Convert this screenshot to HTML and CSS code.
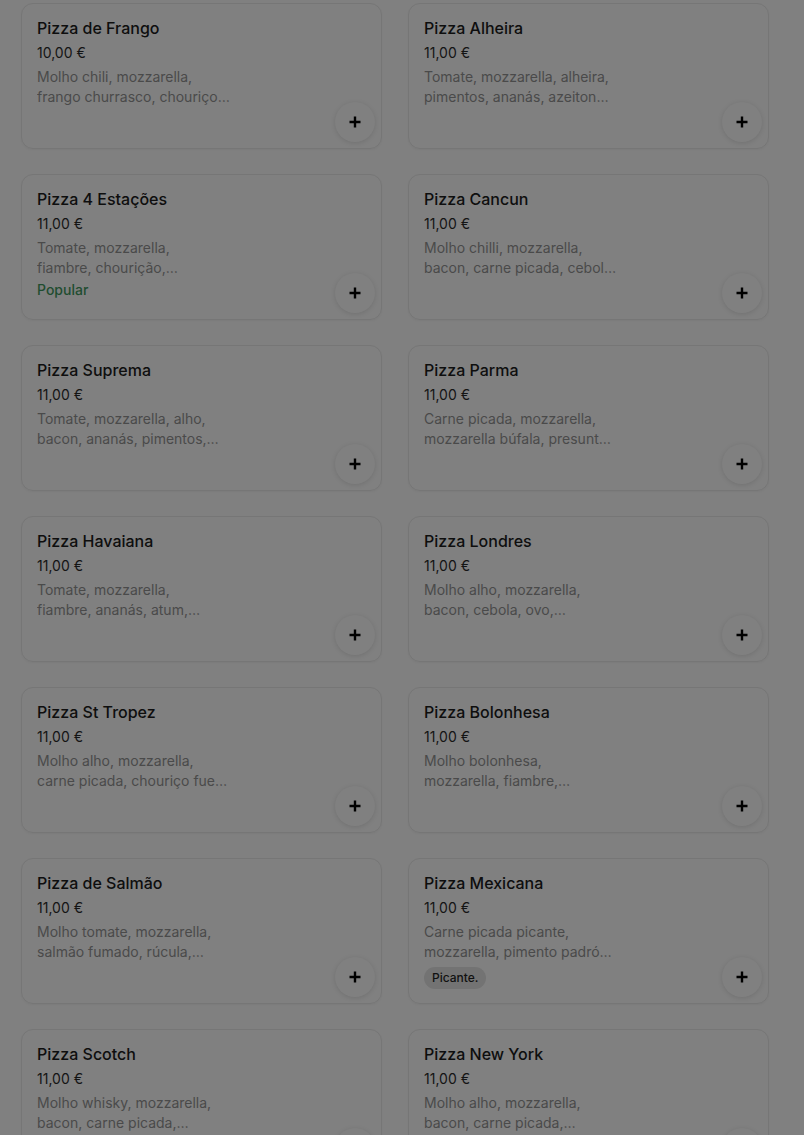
FILE: index.html
```html
<!DOCTYPE html>
<html lang="pt">
<head>
<meta charset="utf-8">
<title>Pizzas</title>
<link rel="stylesheet" href="styles.css">
</head>
<body>
<main class="menu">
  <ul class="grid">
    <li class="card">
      <h3 class="name">Pizza de Frango</h3>
      <div class="price">10,00 €</div>
      <p class="desc"><span class="line">Molho chili, mozzarella,</span><span class="line">frango churrasco, chouriço…</span></p>
      <button class="add" aria-label="Adicionar"><svg viewBox="0 0 16 16"><path d="M8 2.5v11M2.5 8h11"/></svg></button>
    </li>
    <li class="card">
      <h3 class="name">Pizza Alheira</h3>
      <div class="price">11,00 €</div>
      <p class="desc"><span class="line">Tomate, mozzarella, alheira,</span><span class="line">pimentos, ananás, azeiton…</span></p>
      <button class="add" aria-label="Adicionar"><svg viewBox="0 0 16 16"><path d="M8 2.5v11M2.5 8h11"/></svg></button>
    </li>
    <li class="card">
      <h3 class="name">Pizza 4 Estações</h3>
      <div class="price">11,00 €</div>
      <p class="desc"><span class="line">Tomate, mozzarella,</span><span class="line">fiambre, chourição,…</span></p>
      <span class="popular">Popular</span>
      <button class="add" aria-label="Adicionar"><svg viewBox="0 0 16 16"><path d="M8 2.5v11M2.5 8h11"/></svg></button>
    </li>
    <li class="card">
      <h3 class="name">Pizza Cancun</h3>
      <div class="price">11,00 €</div>
      <p class="desc"><span class="line">Molho chilli, mozzarella,</span><span class="line">bacon, carne picada, cebol…</span></p>
      <button class="add" aria-label="Adicionar"><svg viewBox="0 0 16 16"><path d="M8 2.5v11M2.5 8h11"/></svg></button>
    </li>
    <li class="card">
      <h3 class="name">Pizza Suprema</h3>
      <div class="price">11,00 €</div>
      <p class="desc"><span class="line">Tomate, mozzarella, alho,</span><span class="line">bacon, ananás, pimentos,…</span></p>
      <button class="add" aria-label="Adicionar"><svg viewBox="0 0 16 16"><path d="M8 2.5v11M2.5 8h11"/></svg></button>
    </li>
    <li class="card">
      <h3 class="name">Pizza Parma</h3>
      <div class="price">11,00 €</div>
      <p class="desc"><span class="line">Carne picada, mozzarella,</span><span class="line">mozzarella búfala, presunt…</span></p>
      <button class="add" aria-label="Adicionar"><svg viewBox="0 0 16 16"><path d="M8 2.5v11M2.5 8h11"/></svg></button>
    </li>
    <li class="card">
      <h3 class="name">Pizza Havaiana</h3>
      <div class="price">11,00 €</div>
      <p class="desc"><span class="line">Tomate, mozzarella,</span><span class="line">fiambre, ananás, atum,…</span></p>
      <button class="add" aria-label="Adicionar"><svg viewBox="0 0 16 16"><path d="M8 2.5v11M2.5 8h11"/></svg></button>
    </li>
    <li class="card">
      <h3 class="name">Pizza Londres</h3>
      <div class="price">11,00 €</div>
      <p class="desc"><span class="line">Molho alho, mozzarella,</span><span class="line">bacon, cebola, ovo,…</span></p>
      <button class="add" aria-label="Adicionar"><svg viewBox="0 0 16 16"><path d="M8 2.5v11M2.5 8h11"/></svg></button>
    </li>
    <li class="card">
      <h3 class="name">Pizza St Tropez</h3>
      <div class="price">11,00 €</div>
      <p class="desc"><span class="line">Molho alho, mozzarella,</span><span class="line">carne picada, chouriço fue…</span></p>
      <button class="add" aria-label="Adicionar"><svg viewBox="0 0 16 16"><path d="M8 2.5v11M2.5 8h11"/></svg></button>
    </li>
    <li class="card">
      <h3 class="name">Pizza Bolonhesa</h3>
      <div class="price">11,00 €</div>
      <p class="desc"><span class="line">Molho bolonhesa,</span><span class="line">mozzarella, fiambre,…</span></p>
      <button class="add" aria-label="Adicionar"><svg viewBox="0 0 16 16"><path d="M8 2.5v11M2.5 8h11"/></svg></button>
    </li>
    <li class="card">
      <h3 class="name">Pizza de Salmão</h3>
      <div class="price">11,00 €</div>
      <p class="desc"><span class="line">Molho tomate, mozzarella,</span><span class="line">salmão fumado, rúcula,…</span></p>
      <button class="add" aria-label="Adicionar"><svg viewBox="0 0 16 16"><path d="M8 2.5v11M2.5 8h11"/></svg></button>
    </li>
    <li class="card">
      <h3 class="name">Pizza Mexicana</h3>
      <div class="price">11,00 €</div>
      <p class="desc"><span class="line">Carne picada picante,</span><span class="line">mozzarella, pimento padró…</span></p>
      <span class="chip">Picante.</span>
      <button class="add" aria-label="Adicionar"><svg viewBox="0 0 16 16"><path d="M8 2.5v11M2.5 8h11"/></svg></button>
    </li>
    <li class="card">
      <h3 class="name">Pizza Scotch</h3>
      <div class="price">11,00 €</div>
      <p class="desc"><span class="line">Molho whisky, mozzarella,</span><span class="line">bacon, carne picada,…</span></p>
      <button class="add" aria-label="Adicionar"><svg viewBox="0 0 16 16"><path d="M8 2.5v11M2.5 8h11"/></svg></button>
    </li>
    <li class="card">
      <h3 class="name">Pizza New York</h3>
      <div class="price">11,00 €</div>
      <p class="desc"><span class="line">Molho alho, mozzarella,</span><span class="line">bacon, carne picada,…</span></p>
      <button class="add" aria-label="Adicionar"><svg viewBox="0 0 16 16"><path d="M8 2.5v11M2.5 8h11"/></svg></button>
    </li>
  </ul>
</main>
</body>
</html>
```
FILE: styles.css
```css
html, body {
  margin: 0;
  padding: 0;
  background: #808080;
}
body {
  font-family: Inter, "Liberation Sans", sans-serif;
  color: #111;
  overflow: hidden;
}
.menu {
  padding: 3px 0 0 21px;
}
.grid {
  list-style: none;
  margin: 0;
  padding: 0;
  width: 748px;
  display: grid;
  grid-template-columns: 361px 361px;
  grid-auto-rows: 146px;
  column-gap: 26px;
  row-gap: 25px;
}
.card {
  position: relative;
  box-sizing: border-box;
  height: 146px;
  border: 1px solid #767676;
  border-radius: 12px;
  padding: 14px 15px 0;
  display: flex;
  flex-direction: column;
  align-items: flex-start;
  box-shadow: 0 1px 2px rgba(0,0,0,0.04);
  overflow: hidden;
}
.name {
  margin: 0;
  font-size: 16px;
  font-weight: 500;
  line-height: 20px;
  color: #0e0e0e;
}
.price {
  margin-top: 5px;
  font-size: 14px;
  line-height: 20px;
  color: #141414;
}
.desc {
  margin: 4px 0 0;
  width: 200px;
  font-size: 14px;
  line-height: 20px;
  color: #4a4a4a;
}
.line {
  display: block;
  white-space: nowrap;
  overflow: hidden;
  text-overflow: ellipsis;
}
.popular {
  margin-top: 2px;
  font-size: 14px;
  font-weight: 500;
  line-height: 20px;
  color: #1f4d30;
}
.chip {
  margin-top: 5px;
  padding: 0 8px;
  height: 22px;
  border-radius: 11px;
  background: #737373;
  font-size: 12px;
  font-weight: 500;
  line-height: 22px;
  color: #111;
}
.add {
  position: absolute;
  right: 6px;
  bottom: 6px;
  width: 40px;
  height: 40px;
  border: 0;
  border-radius: 50%;
  background: #808080;
  box-shadow: 0 1px 5px rgba(0,0,0,0.12);
  display: flex;
  align-items: center;
  justify-content: center;
  padding: 0;
}
.add svg {
  width: 16px;
  height: 16px;
  fill: none;
  stroke: #000;
  stroke-width: 2.4;
}
```
